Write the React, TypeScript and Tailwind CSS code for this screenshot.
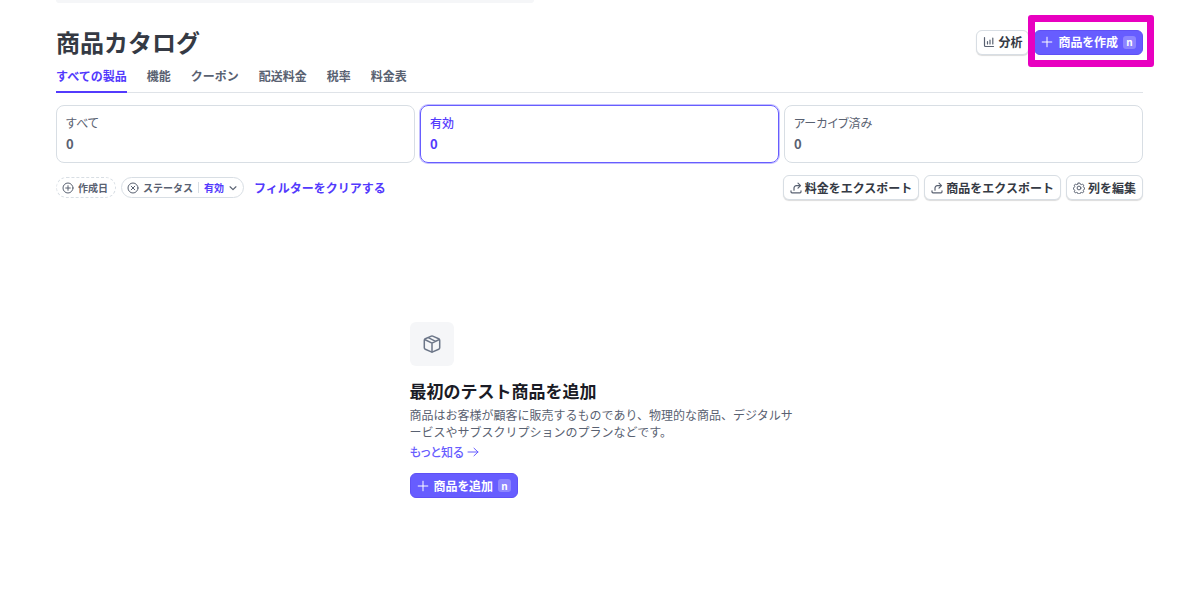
import type { ReactNode } from "react";

const tabs = ["すべての製品", "機能", "クーポン", "配送料金", "税率", "料金表"];

const cards = [
  { label: "すべて", count: 0, active: false },
  { label: "有効", count: 0, active: true },
  { label: "アーカイブ済み", count: 0, active: false },
];

function Icon({ size, children }: { size: number; children: ReactNode }) {
  return (
    <svg
      width={size}
      height={size}
      viewBox="0 0 12 12"
      fill="none"
      stroke="currentColor"
      strokeWidth="1"
      strokeLinecap="round"
      strokeLinejoin="round"
      aria-hidden="true"
      className="shrink-0"
    >
      {children}
    </svg>
  );
}

function ChartIcon() {
  return (
    <Icon size={12}>
      <path
        d="M1.5 1.500v8a1 1 0 0 0 1 1h8M4.500 5.500v2.500M7 4v4M9.800 2v6"
        strokeWidth="1.200"
      />
    </Icon>
  );
}

function ExportIcon() {
  return (
    <Icon size={12}>
      <path
        d="M1 8.800v1a1 1 0 0 0 1 1h8a1 1 0 0 0 1-1v-1M4 8.200v-2.200a2.300 2.300 0 0 1 2.300-2.300h4M8 1.200l2.500 2.500-2.500 2.500"
        strokeWidth="1.200"
      />
    </Icon>
  );
}

function GearIcon() {
  return (
    <Icon size={12}>
      <path
        d="M5.200 1h1.600l.5 1.200 1.100.4 1.200-.5 1.100 1.100-.5 1.200.4.900 1.100.6v1.200l-1.100.6-.4.900.5 1.200-1.100 1.100-1.200-.5-1.100.4-.5 1.200h-1.600l-.5-1.200-1.100-.4-1.200.5-1.100-1.100.5-1.200-.4-.900-1.100-.6v-1.200l1.100-.6.4-.900-.5-1.200 1.100-1.100 1.200.5 1.100-.4z"
      />
      <circle cx="6" cy="6" r="1.900" />
    </Icon>
  );
}

function BoxIcon() {
  return (
    <svg
      width="18"
      height="18"
      viewBox="0 0 18 18"
      fill="none"
      stroke="currentColor"
      strokeWidth="1.500"
      strokeLinejoin="round"
      strokeLinecap="round"
      aria-hidden="true"
    >
      <path d="M9.700 1.100l6 2.600q1 .5 1 1.500v7.600q0 1-1 1.500l-6 2.600q-.7.300-1.400 0l-6-2.600q-1-.5-1-1.500V5.200q0-1 1-1.500l6-2.600q.7-.3 1.400 0z" />
      <path d="M1.700 4.500L9 8.200l7.300-3.700M9 8.200v8.800M5.300 2.700l7.300 3.600" />
    </svg>
  );
}

function SecondaryButton({ icon, children }: { icon: ReactNode; children: ReactNode }) {
  return (
    <button
      type="button"
      className="flex h-[25px] items-center gap-[3px] rounded-md border border-[#d8dee4] bg-white px-[6px] text-xs font-bold whitespace-nowrap text-[#353a44] shadow-[0_1px_1px_rgba(0,0,0,0.14)]"
    >
      <span className="text-[#596171]">{icon}</span>
      {children}
    </button>
  );
}

function PrimaryButton({ children }: { children: ReactNode }) {
  return (
    <button
      type="button"
      className="flex h-[25px] items-center gap-[5px] rounded-md border border-[#5f51f5] bg-[#675dff] px-[6px] text-xs font-bold whitespace-nowrap text-white [font-feature-settings:'palt']"
    >
      <Icon size={12}>
        <path d="M6 1.200v9.600M1.200 6h9.600" />
      </Icon>
      {children}
      <kbd className="flex h-[13px] w-[13px] items-center justify-center rounded-[3px] bg-[#8d85ff] font-['Noto_Sans_CJK_JP',sans-serif] text-[10px] leading-[12px] font-bold">
        n
      </kbd>
    </button>
  );
}

export default function App() {
  return (
    <div
      lang="ja"
      className="min-h-screen bg-white pr-[57px] pb-8 pl-14 font-['Noto_Sans_CJK_JP',sans-serif] text-[#596171]"
    >
      <div className="h-[3px] w-[44%] rounded-b-[4px] bg-[#f5f6f8]" />

      <header className="mt-[23px] flex h-8 items-center justify-between">
        <h1 className="text-2xl leading-8 font-bold text-[#353a44]">商品カタログ</h1>
        <div className="flex items-center gap-[5px]">
          <SecondaryButton icon={<ChartIcon />}>分析</SecondaryButton>
          <div className="relative">
            <PrimaryButton>商品を作成</PrimaryButton>
            <div className="pointer-events-none absolute -top-[15px] -right-[11px] -bottom-[12px] -left-[6px] rounded-[3px] border-[7px] border-[#e800c0]" />
          </div>
        </div>
      </header>

      <nav className="mt-[7px] flex gap-5 border-b border-[#dfe3e8]">
        {tabs.map((tab, i) => (
          <a
            key={tab}
            href="#"
            aria-current={i === 0 ? "page" : undefined}
            className={
              i === 0
                ? "-mb-px border-b-2 border-[#533afd] pt-[2px] pb-[6px] text-xs leading-[18px] font-bold text-[#533afd]"
                : "-mb-px pt-[2px] pb-2 text-xs leading-[18px] font-bold text-[#596171]"
            }
          >
            {tab}
          </a>
        ))}
      </nav>

      <section className="mt-3 grid grid-cols-3 gap-[5px]">
        {cards.map((card) => (
          <button
            key={card.label}
            type="button"
            aria-pressed={card.active}
            className={
              card.active
                ? "h-[58px] rounded-lg border border-[#675dff] px-[9px] text-left text-[#533afd] ring-1 ring-[#675dff]/40"
                : "h-[58px] rounded-lg border border-[#d8dee4] px-[9px] text-left text-[#596171]"
            }
          >
            <span
              className={
                card.active
                  ? "block text-xs leading-5 font-medium"
                  : "block text-xs leading-5 [font-feature-settings:'palt']"
              }
            >
              {card.label}
            </span>
            <span className="block text-[13px] leading-[22px] font-bold">{card.count}</span>
          </button>
        ))}
      </section>

      <section className="mt-3 flex items-center justify-between">
        <div className="flex items-center gap-[5px]">
          <button
            type="button"
            className="flex h-[21px] items-center gap-1 rounded-full border border-dashed border-[#d8dee4] pr-[7px] pl-[5px] text-[10px] font-bold"
          >
            <Icon size={12}>
              <circle cx="6" cy="6" r="5" />
              <path d="M6 3.700v4.600M3.700 6h4.600" />
            </Icon>
            作成日
          </button>
          <button
            type="button"
            className="flex h-[21px] items-center gap-1 rounded-full border border-[#d8dee4] px-[5px] text-[10px] font-bold"
          >
            <Icon size={12}>
              <circle cx="6" cy="6" r="5" />
              <path d="M4.200 4.200l3.600 3.600M7.800 4.200l-3.600 3.600" />
            </Icon>
            ステータス
            <span className="mx-px h-[11px] w-px bg-[#d8dee4]" />
            <span className="text-[#533afd]">有効</span>
            <Icon size={10}>
              <path d="M2.500 4.500l3.500 3.500 3.500-3.500" strokeWidth="1.400" />
            </Icon>
          </button>
          <button type="button" className="ml-[5px] text-xs font-bold text-[#533afd]">
            フィルターをクリアする
          </button>
        </div>
        <div className="flex items-center gap-[5px]">
          <SecondaryButton icon={<ExportIcon />}>料金をエクスポート</SecondaryButton>
          <SecondaryButton icon={<ExportIcon />}>商品をエクスポート</SecondaryButton>
          <SecondaryButton icon={<GearIcon />}>列を編集</SecondaryButton>
        </div>
      </section>

      <main className="mx-auto mt-[122px] flex max-w-[380px] flex-col items-start">
        <div className="flex h-11 w-11 items-center justify-center rounded-md bg-[#f5f6f8] text-[#6c7688]">
          <BoxIcon />
        </div>
        <h2 className="mt-[13px] text-[17px] leading-6 font-bold text-[#1a1b25]">
          最初のテスト商品を追加
        </h2>
        <p className="mt-[3px] -mr-1 text-xs leading-[17px] [line-break:anywhere]">
          商品はお客様が顧客に販売するものであり、物理的な商品、デジタルサービスやサブスクリプションのプランなどです。
        </p>
        <a
          href="#"
          className="mt-[3px] flex items-center gap-[3px] text-xs leading-[18px] font-medium text-[#675dff] [font-feature-settings:'palt']"
        >
          もっと知る
          <Icon size={12}>
            <path d="M1 6h10M7 2.200l4 3.800-4 3.800" />
          </Icon>
        </a>
        <div className="mt-3">
          <PrimaryButton>商品を追加</PrimaryButton>
        </div>
      </main>
    </div>
  );
}
